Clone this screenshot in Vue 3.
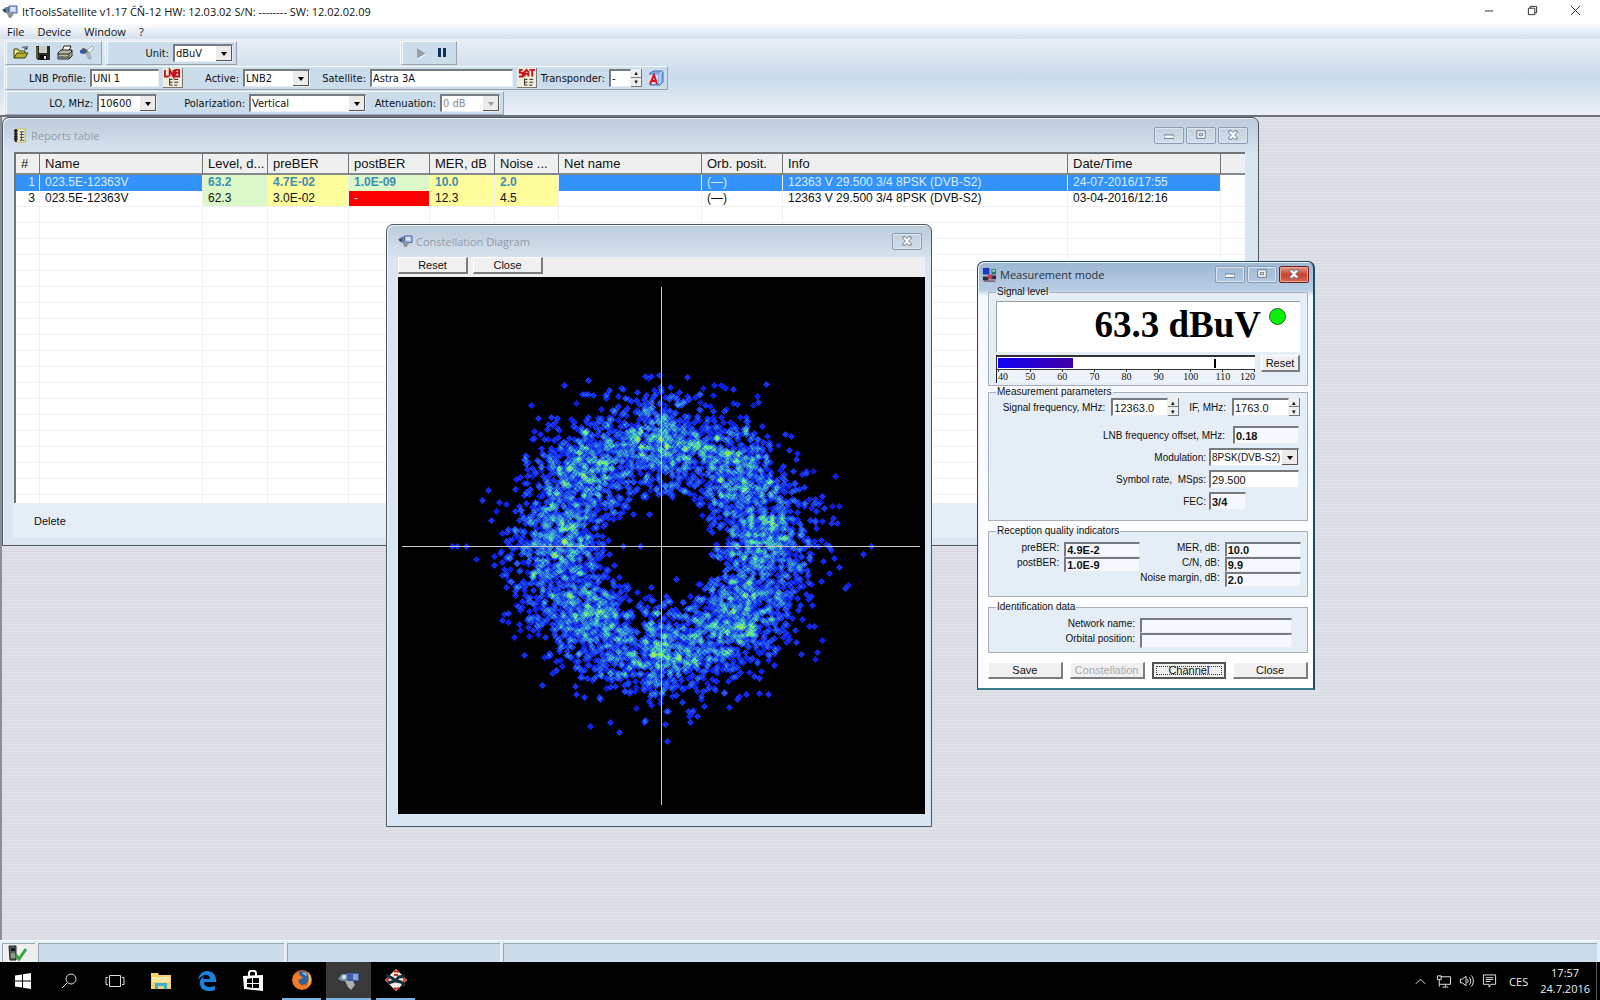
<script setup>
import { ref, onMounted } from 'vue'

const columns = [
  { label: '#', width: 24 },
  { label: 'Name', width: 163 },
  { label: 'Level, d...', width: 65 },
  { label: 'preBER', width: 81 },
  { label: 'postBER', width: 81 },
  { label: 'MER, dB', width: 65 },
  { label: 'Noise ...', width: 64 },
  { label: 'Net name', width: 143 },
  { label: 'Orb. posit.', width: 81 },
  { label: 'Info', width: 285 },
  { label: 'Date/Time', width: 153 },
  { label: '', width: 24 }
]

const tones = ['', '', 'green', 'yellow', 'green', 'yellow', 'yellow', '', '', '', '', 'plain']

const reports = [
  ['1', '023.5E-12363V', '63.2', '4.7E-02', '1.0E-09', '10.0', '2.0', '', '(—)', '12363 V 29.500 3/4 8PSK (DVB-S2)', '24-07-2016/17:55', ''],
  ['3', '023.5E-12363V', '62.3', '3.0E-02', '-', '12.3', '4.5', '', '(—)', '12363 V 29.500 3/4 8PSK (DVB-S2)', '03-04-2016/12:16', '']
]

const menus = ['File', 'Device', 'Window', '?']
const scale = [40, 50, 60, 70, 80, 90, 100, 110, 120]

const unit = ref('dBuV')
const profile = ref('UNI 1')
const active = ref('LNB2')
const satellite = ref('Astra 3A')
const transponder = ref('-')
const lo = ref('10600')
const polarization = ref('Vertical')
const frequency = ref('12363.0')
const intermediate = ref('1763.0')
const offset = ref('0.18')
const modulation = ref('8PSK(DVB-S2)')
const symbolRate = ref('29.500')
const fec = ref('3/4')
const level = ref(63.3)
const plot = ref(null)

// small seeded generator, keeps the diagram the same on every load
let seed = 20160724
const random = () => {
  seed = (seed * 1664525 + 1013904223) >>> 0
  return (seed + 1) / 4294967297
}
const gauss = () => Math.sqrt(-2 * Math.log(random())) * Math.cos(2 * Math.PI * random())

const shades = [
  [0, 0, 0],
  [12, 32, 236],
  [30, 72, 236],
  [48, 120, 222],
  [62, 160, 208],
  [74, 204, 184],
  [84, 238, 150],
  [130, 248, 110],
  [205, 220, 50]
]

const drawConstellation = () => {
  const canvas = plot.value
  const w = canvas.width
  const h = canvas.height
  const cx = 263
  const cy = 269
  const hits = new Float32Array(w * h)

  const hit = (px, py, weight) => {
    const x = Math.round(px)
    const y = Math.round(py)
    for (let dy = -3; dy <= 3; dy++) {
      for (let dx = -3; dx <= 3; dx++) {
        if (Math.abs(dx) + Math.abs(dy) > 3) continue
        const i = (y + dy) * w + x + dx
        if (i >= 0 && i < hits.length) hits[i] += weight
      }
    }
  }

  for (let i = 0; i < 5600; i++) {
    const angle = Math.floor(random() * 8) * Math.PI / 4 + gauss() * 0.27
    const radius = 109 + gauss() * 25
    if (radius < 50) continue
    hit(cx + Math.cos(angle) * radius, cy + Math.sin(angle) * radius, 0.8 + random() * 0.9)
  }

  const strays = [
    [-209, 0], [-204, 0], [-195, 0], [-38, 0], [-21, 0], [210, 0], [202, 8], [168, 0],
    [-97, -161], [-68, -151], [97, -144], [-2, -171], [-42, 186], [-17, 176], [4, 178],
    [29, 176], [36, 170], [-179, -46], [-173, -56], [145, -73], [161, -50], [172, -28],
    [-123, -128], [-135, -90], [-137, 109], [-119, 139], [107, 148], [140, 108], [178, 21],
    [-167, 19], [-61, 153], [15, 33], [-10, 41], [-28, -32], [-12, -32]
  ]
  strays.forEach(([x, y]) => hit(cx + x, cy + y, 1.5))

  const ctx = canvas.getContext('2d')
  const image = ctx.createImageData(w, h)
  for (let i = 0; i < hits.length; i++) {
    const heat = hits[i] > 1 ? 1 + (hits[i] - 1) * (0.45 + random() * 0.4) : hits[i]
    const t = Math.min(heat, shades.length - 1)
    const k = Math.min(Math.floor(t), shades.length - 2)
    const f = t - k
    for (let c = 0; c < 3; c++) {
      image.data[i * 4 + c] = shades[k][c] * (1 - f) + shades[k + 1][c] * f
    }
    image.data[i * 4 + 3] = 255
  }
  ctx.putImageData(image, 0, 0)

  ctx.fillStyle = '#c9c9c0'
  ctx.fillRect(cx, 10, 1, 518)
  ctx.fillRect(4, cy, 518, 1)
}

onMounted(drawConstellation)
</script>

<template>
  <div class="desktop">
    <svg class="defs" aria-hidden="true">
      <symbol id="meter" viewBox="0 0 16 14">
        <path d="M0 5 4 2h4v6H3z" fill="#6b7f94" />
        <path d="M7 1h8v7H7z" fill="#b4cdf2" stroke="#3a5aa4" />
        <path d="M9 3h4M9 5h4" stroke="#fff" />
        <path d="M4 7h7l1 2-3 4H7z" fill="#8d969c" />
        <path d="M1 4h3v3H2z" fill="#3d4b5c" />
      </symbol>
      <symbol id="cross" viewBox="0 0 12 12">
        <path d="M1 1h3l2 2 2-2h3v2L8 6l3 3v2H8L6 9l-2 2H1V9l3-3-3-3z" fill="#fff" stroke="#566577" />
      </symbol>
      <symbol id="mini" viewBox="0 0 12 12">
        <rect x="0" y="6" width="12" height="4" fill="#fff" stroke="#566577" />
      </symbol>
      <symbol id="maxi" viewBox="0 0 12 12">
        <path d="M1 1h10v9H1z" fill="#fff" stroke="#566577" />
        <path d="M4 4h4v3H4z" fill="#d3dfeb" stroke="#566577" />
      </symbol>
    </svg>

    <header class="titlebar">
      <svg class="app-icon"><use href="#meter" /></svg>
      <span class="app-title">ItToolsSatellite v1.17 ČŇ-12 HW: 12.03.02 S/N: -------- SW: 12.02.02.09</span>
      <button class="sys" aria-label="Minimize"><svg viewBox="0 0 12 12"><path d="M1 6.500h9" /></svg></button>
      <button class="sys" aria-label="Restore"><svg viewBox="0 0 12 12"><path d="M1.500 3.500h7v7h-7zM3.500 3.500v-2h7v7h-2" /></svg></button>
      <button class="sys" aria-label="Close application"><svg viewBox="0 0 12 12"><path d="M1 1l10 10M11 1L1 11" /></svg></button>
    </header>

    <nav class="menubar">
      <button v-for="m in menus" :key="m">{{ m }}</button>
    </nav>

    <section class="toolbars">
      <div class="bar-row">
        <div class="band">
          <button class="tool" aria-label="Open">
            <svg viewBox="0 0 16 16">
              <path d="M1 13V4h4l1 2h6v2" fill="#f3ee7c" stroke="#3e3c10" />
              <path d="M1 13l3-5h11l-3 5z" fill="#b6ac32" stroke="#3e3c10" />
              <path d="M9 3c2-2 4-1 5 1M14 1v3h-3" fill="none" stroke="#1c2c48" />
            </svg>
          </button>
          <button class="tool" aria-label="Save file">
            <svg viewBox="0 0 16 16">
              <path d="M1 1h14v14H3l-2-2z" fill="#2a2c20" />
              <path d="M4 1h8v7H4z" fill="#c8ccc8" />
              <path d="M5 10h7v5H5z" fill="#0c0c0c" /><path d="M9 11h2v3H9z" fill="#e8e8e8" />
              <path d="M2 2v11" stroke="#8a8a40" />
            </svg>
          </button>
          <button class="tool" aria-label="Print">
            <svg viewBox="0 0 16 16">
              <path d="M5 6l2-5h7l-2 5z" fill="#fff" stroke="#222" />
              <path d="M1 8l3-3h11v6l-3 3H1z" fill="#b8b8b0" stroke="#222" />
              <path d="M1 9h11l3-3M2 12h9M12 9v5" stroke="#222" fill="none" />
              <path d="M7 11h2" stroke="#d8c820" />
            </svg>
          </button>
          <button class="tool" aria-label="Connect">
            <svg viewBox="0 0 16 16">
              <path d="M1 6l3-3 3 1 2 3-3 2-4-1z" fill="#4b5866" />
              <path d="M8 5l5-4 2 2-4 5z" fill="#e6edf3" stroke="#a0adb9" />
              <path d="M6 8l4-1 3 6-2 2-2-1z" fill="#aab3bc" /><path d="M1 5l3 2v2L1 8z" fill="#2d5cc0" />
            </svg>
          </button>
        </div>
        <div class="band unit-band">
          <label for="unit" class="l62">Unit:</label>
          <span class="combo w60"><select id="unit" v-model="unit"><option>dBuV</option></select></span>
        </div>
        <div class="band play-band">
          <button class="tool" aria-label="Start" disabled><svg viewBox="0 0 16 16"><path d="M5 3v11l9-5z" fill="#9a9da0" /><path d="M5 14l9-5" stroke="#fff" /></svg></button>
          <button class="tool" aria-label="Pause"><svg viewBox="0 0 16 16"><path d="M4 3h3v9H4zM9 3h3v9H9z" fill="#10305c" /></svg></button>
        </div>
      </div>

      <div class="bar-row">
        <div class="band">
          <label for="profile" class="l80">LNB Profile:</label>
          <input id="profile" v-model="profile" class="box w69">
          <button class="pic" aria-label="Edit LNB profiles">
            <svg viewBox="0 0 20 20">
              <path d="M2 2v7h4M7 9V2l4 7V2M13 2h4v7h-4zM13 5h4" fill="none" stroke="#c41420" stroke-width="2" />
              <path d="M7 11v7M7 12h3M7 15h3M7 18h3M12 12h4M12 15h4M12 18h3" stroke="#222" fill="none" />
            </svg>
          </button>
          <label for="active" class="l60">Active:</label>
          <span class="combo w67"><select id="active" v-model="active"><option>LNB2</option></select></span>
          <label for="satellite" class="l60">Satellite:</label>
          <input id="satellite" v-model="satellite" class="box w143">
          <button class="pic" aria-label="Edit satellites">
            <svg viewBox="0 0 20 20">
              <path d="M6 2H3v3h3v4H2M8 9V4l2-2 2 2v5M8 6h4M13 2h6M16 2v7" fill="none" stroke="#c41420" stroke-width="2" />
              <path d="M8 11v7M8 12h3M8 15h3M8 18h3M13 12h4M13 15h4M13 18h3" stroke="#222" fill="none" />
            </svg>
          </button>
          <label for="transponder" class="l72">Transponder:</label>
          <input id="transponder" v-model="transponder" class="box w22">
          <span class="spin"><button aria-label="Next transponder">▴</button><button aria-label="Previous transponder">▾</button></span>
          <button class="tool detect" aria-label="Auto detect">
            <svg viewBox="0 0 16 16">
              <path d="M2 3l4-2h9v11l-3 3H2z" fill="#7fb0ea" stroke="#3d6cb8" />
              <path d="M12 4v10M12 4l3-3" stroke="#e4f0fc" />
              <path d="M1 5h9v9H1z" fill="#f2d8e4" />
              <path d="M2 14L6 5l3 9M3 11h5" fill="none" stroke="#d01828" stroke-width="2" />
            </svg>
          </button>
        </div>
      </div>

      <div class="bar-row">
        <div class="band">
          <label for="lo" class="l87">LO, MHz:</label>
          <span class="combo w60"><select id="lo" v-model="lo"><option>10600</option></select></span>
          <label for="pol" class="l92">Polarization:</label>
          <span class="combo w117"><select id="pol" v-model="polarization"><option>Vertical</option></select></span>
          <label for="att" class="l74">Attenuation:</label>
          <span class="combo w60 off"><select id="att" disabled><option>0 dB</option></select></span>
        </div>
      </div>
    </section>

    <main class="workspace">
      <section class="window reports">
        <div class="caption">
          <svg viewBox="0 0 16 16">
            <path d="M4 1h9v14H4z" fill="#f8f7c8" stroke="#c0b648" />
            <path d="M3 1v14M1 3h4M1 6h4M1 9h4M1 12h4" stroke="#222" stroke-width="2" />
            <path d="M7 4h5M7 7h5M7 10h5M7 13h5M9 4v9" stroke="#33339a" />
          </svg>
          <h2>Reports table</h2>
          <button class="cap" aria-label="Minimize reports"><svg><use href="#mini" /></svg></button>
          <button class="cap" aria-label="Maximize reports"><svg><use href="#maxi" /></svg></button>
          <button class="cap" aria-label="Close reports"><svg><use href="#cross" /></svg></button>
        </div>
        <div class="list">
          <table>
            <colgroup>
              <col v-for="(c, i) in columns" :key="i" :style="{ width: c.width + 'px' }">
            </colgroup>
            <thead>
              <tr><th v-for="(c, i) in columns" :key="i" scope="col">{{ c.label }}</th></tr>
            </thead>
            <tbody>
              <tr v-for="(row, r) in reports" :key="r" :class="{ selected: r === 0 }">
                <td v-for="(cell, i) in row" :key="i" :class="[tones[i], { red: i === 4 && cell === '-' }]">{{ cell }}</td>
              </tr>
              <tr v-for="n in 19" :key="'empty' + n">
                <td v-for="(c, i) in columns" :key="i"></td>
              </tr>
            </tbody>
          </table>
        </div>
        <div class="report-actions"><button>Delete</button></div>
      </section>

      <section class="window constellation">
        <div class="caption">
          <svg class="low"><use href="#meter" /></svg>
          <h2>Constellation Diagram</h2>
          <button class="cap" aria-label="Close constellation diagram"><svg><use href="#cross" /></svg></button>
        </div>
        <div class="plot-actions">
          <button class="btn">Reset</button>
          <button class="btn">Close</button>
        </div>
        <canvas ref="plot" width="527" height="537"></canvas>
      </section>

      <section class="window measure">
        <div class="caption">
          <svg viewBox="0 0 16 16">
            <path d="M1 1h7v7H1z" fill="#1838c8" /><path d="M10 2h5v6h-5z" fill="#2c7870" />
            <path d="M1 10h6v4H1zM9 9h6v4H9z" fill="#2a2a34" /><path d="M6 8h5v5H6z" fill="#c84058" />
            <path d="M2 15h12" stroke="#601828" /><path d="M11 3h3v2h-3z" fill="#9fe0c8" />
          </svg>
          <h2>Measurement mode</h2>
          <button class="cap" aria-label="Minimize measurement"><svg><use href="#mini" /></svg></button>
          <button class="cap" aria-label="Maximize measurement"><svg><use href="#maxi" /></svg></button>
          <button class="cap danger" aria-label="Close measurement"><svg><use href="#cross" /></svg></button>
        </div>
        <div class="panel">
          <fieldset class="signal">
            <legend>Signal level</legend>
            <div class="display">
              <output>63.3 dBuV</output>
              <i class="lamp"></i>
            </div>
            <div class="gauge-row">
              <div class="gauge">
                <div class="track">
                  <div class="fill" :style="{ width: (level - 40) / 80 * 100 + '%' }"></div>
                  <div class="peak"></div>
                </div>
                <div class="ticks"><span v-for="s in scale" :key="s">{{ s }}</span></div>
              </div>
              <button class="btn">Reset</button>
            </div>
          </fieldset>

          <fieldset class="params">
            <legend>Measurement parameters</legend>
            <div class="line first">
              <label for="freq">Signal frequency, MHz:</label>
              <span class="spinbox"><input id="freq" v-model="frequency" class="box"><span class="spin"><button aria-label="Raise frequency">▴</button><button aria-label="Lower frequency">▾</button></span></span>
              <label for="inter" class="pad-if">IF, MHz:</label>
              <span class="spinbox"><input id="inter" v-model="intermediate" class="box"><span class="spin"><button aria-label="Raise IF">▴</button><button aria-label="Lower IF">▾</button></span></span>
            </div>
            <div class="line">
              <label for="offset">LNB frequency offset, MHz:</label>
              <input id="offset" v-model="offset" class="box ro w66" readonly>
            </div>
            <div class="line near">
              <label for="modulation">Modulation:</label>
              <span class="combo w90"><select id="modulation" v-model="modulation"><option>8PSK(DVB-S2)</option></select></span>
            </div>
            <div class="line near">
              <label for="rate">Symbol rate,&nbsp; MSps:</label>
              <input id="rate" v-model="symbolRate" class="box w90">
            </div>
            <div class="line near">
              <label for="fec">FEC:</label>
              <span class="w90"><input id="fec" v-model="fec" class="box ro w37" readonly></span>
            </div>
          </fieldset>

          <fieldset class="quality">
            <legend>Reception quality indicators</legend>
            <div class="pairs">
              <label for="pre">preBER:</label><input id="pre" value="4.9E-2" class="box ro" readonly>
              <label for="post">postBER:</label><input id="post" value="1.0E-9" class="box ro" readonly>
            </div>
            <div class="pairs">
              <label for="mer">MER, dB:</label><input id="mer" value="10.0" class="box ro" readonly>
              <label for="cn">C/N, dB:</label><input id="cn" value="9.9" class="box ro" readonly>
              <label for="margin">Noise margin, dB:</label><input id="margin" value="2.0" class="box ro" readonly>
            </div>
          </fieldset>

          <fieldset class="ident">
            <legend>Identification data</legend>
            <div class="pairs wide">
              <label for="net">Network name:</label><input id="net" value="" class="box ro" readonly>
              <label for="orb">Orbital position:</label><input id="orb" value="" class="box ro" readonly>
            </div>
          </fieldset>

          <div class="buttons">
            <button class="btn">Save</button>
            <button class="btn" disabled>Constellation</button>
            <button class="btn default">Channel</button>
            <button class="btn">Close</button>
          </div>
        </div>
      </section>
    </main>

    <footer class="statusbar">
      <div class="cell device">
        <svg viewBox="0 0 20 16">
          <path d="M1 1h7v14H2z" fill="#566058" stroke="#222" /><path d="M3 3h4v3H3z" fill="#101820" /><path d="M3 8h4v5H3z" fill="#86a08c" />
          <path d="M8 10l3 4 7-10" fill="none" stroke="#35a53c" stroke-width="3" />
        </svg>
      </div>
      <div class="cell second"></div>
      <div class="cell third"></div>
      <div class="cell rest"></div>
    </footer>

    <div class="taskbar">
      <button class="task" aria-label="Start menu"><svg viewBox="0 0 16 16"><path d="M0 2.500 7 1.500v6H0zM8 1.300 16 0v7.500H8zM0 8.500h7v6l-7-1zM8 8.500h8V16l-8-1.300z" fill="#fff" /></svg></button>
      <button class="task" aria-label="Search"><svg viewBox="0 0 16 16"><circle cx="10" cy="6" r="5" fill="none" stroke="#ddd" /><path d="M6 10L1 15" stroke="#ddd" /></svg></button>
      <button class="task" aria-label="Task view"><svg class="wide-icon" viewBox="0 0 20 16"><path d="M4.500 2.500h11v11h-11zM3 4.500H1v7h2M17 4.500h2v7h-2" fill="none" stroke="#ddd" /></svg></button>
      <button class="task" aria-label="File Explorer">
        <svg class="wide-icon" viewBox="0 0 20 18"><path d="M0 1h7l1 2h12v14H0z" fill="#f5d06c" /><path d="M1 5h18v5H1z" fill="#fbe8a4" /><path d="M4 17v-6h12v6h-3v-3H7v3z" fill="#38b0d8" /></svg>
      </button>
      <button class="task" aria-label="Edge">
        <svg class="wide-icon" viewBox="0 0 20 20"><path d="M1 9C2 3 6 0 10 0c6 0 9 4 9 9v2H7c0 3 2 5 6 5 2 0 4-1 5-1v4c-2 1-4 1-6 1-6 0-9-3-9-8 0-4 2-6 5-7-1 1-2 2-2 3h7c0-2-1-4-4-4-3 0-6 2-8 5z" fill="#1a82dc" /></svg>
      </button>
      <button class="task" aria-label="Store">
        <svg class="store-icon" viewBox="0 0 20 22"><path d="M0 6l20-1v16L1 19z" fill="#fff" /><path d="M6 6V3c0-3 7-3 7 0v3" fill="none" stroke="#fff" stroke-width="2" /><path d="M4 9l5-1v5H4zM10 8h6v5h-6zM4 14h5v4l-5-1zM10 14h6v4h-6z" fill="#000" /></svg>
      </button>
      <button class="task open" aria-label="Firefox">
        <svg class="big-icon" viewBox="0 0 22 22"><circle cx="11" cy="11" r="10" fill="#e66522" /><circle cx="11" cy="9" r="7" fill="#2c62a8" /><path d="M3 5c-3 6-1 13 6 15 5 1 10-2 11-7-3 4-8 5-11 2-2-2-2-4 0-5l3-1-2-2-2-1V3C6 3 5 5 4 6z" fill="#f07c24" /><path d="M17 3c4 4 4 10 0 14 1-5 1-9 0-14z" fill="#fbc83c" /><path d="M11 4c3-2 5 0 5 3-2-1-3-1-5-3z" fill="#78b8e0" /></svg>
      </button>
      <button class="task open current" aria-label="ItToolsSatellite">
        <svg class="big-icon" viewBox="0 0 22 22"><path d="M0 10l4-5h6v7H4z" fill="#7e90aa" /><path d="M9 4h12v8H9z" fill="#3e5ea8" /><path d="M15 6h5M15 8h5M15 10h5" stroke="#dce6f4" /><path d="M7 12h8l2 4-4 5-3-3z" fill="#a7b0b6" /><circle cx="6" cy="8" r="2" fill="#dce4ec" /></svg>
      </button>
      <button class="task open" aria-label="Tools">
        <svg class="big-icon" viewBox="0 0 22 22"><path d="M11 0l11 11-11 11L0 11z" fill="#f3ece4" /><path d="M9 3l2-1 3 1M9 6h4M18 9l2 2-2 3M9 19l2 1 3-1M4 9l-2 2 2 3" fill="none" stroke="#cc3322" stroke-width="2" /><path d="M1 6l6 3 4 3 5 1 4 4M3 14l7-2 4-4 6-1" stroke="#18303c" stroke-width="3" fill="none" /></svg>
      </button>
      <div class="tray">
        <svg viewBox="0 0 16 16"><path d="M3 11l5-5 5 5" /></svg>
        <svg viewBox="0 0 16 16"><path d="M5 3.500h10.500v8H4M1.500 2.500h4v4h-4zM3.500 7v7M7 14.500h6M10 12v2" /></svg>
        <svg viewBox="0 0 16 16"><path d="M1.500 6v4h2l4 3V3l-4 3zM9 6c1 1 1 3 0 4M11 4c2 2 2 6 0 8M13 2c3 3 3 9 0 12" /></svg>
        <svg viewBox="0 0 16 16"><path d="M1.500 1.500h13v10h-5l-2 3v-3h-6zM4 4.500h8M4 6.500h8M4 8.500h5" /></svg>
        <span>CES</span>
        <time>17:57<br>24.7.2016</time>
      </div>
    </div>
  </div>
</template>

<style>
body {
  margin: 0;
}
</style>

<style scoped>
* {
  box-sizing: border-box;
}

.desktop {
  display: flex;
  flex-direction: column;
  min-height: 100vh;
  font-family: "Liberation Sans", Arial, sans-serif;
  font-size: 11px;
  color: #111;
  background: #fff;
}

.defs {
  position: absolute;
  width: 0;
  height: 0;
}

button {
  padding: 0;
  border: none;
  background: none;
  font: inherit;
  color: inherit;
}

h2 {
  margin: 0;
  font-weight: 400;
}

/* main window */
.titlebar {
  display: flex;
  align-items: center;
  height: 23px;
  padding: 0 3px 0 2px;
  font-family: "Open Sans", "Noto Sans", sans-serif;
  font-size: 11px;
}

.app-icon {
  width: 16px;
  height: 14px;
  margin-right: 4px;
}

.app-title {
  flex: 1;
}

.sys {
  width: 43px;
  height: 20px;
}

.sys svg {
  width: 11px;
  height: 11px;
  fill: none;
  stroke: #222;
}

.menubar {
  display: flex;
  gap: 13px;
  height: 16px;
  padding-left: 7px;
  font-family: "Open Sans", "Noto Sans", sans-serif;
  font-size: 11px;
  line-height: 15px;
  background: linear-gradient(#fff, #d3e0ee);
}

.toolbars {
  display: flex;
  flex-direction: column;
  gap: 1px;
  padding: 2px 4px 0;
  font-family: "DejaVu Sans Condensed", "Noto Sans", sans-serif;
  font-size: 11px;
  background: linear-gradient(#e9eef6, #c9dbeb 50%, #dce8f2 80%, #ebeff6);
  border-bottom: 2px solid #6c727a;
}

.bar-row {
  display: flex;
}

.band {
  display: flex;
  align-items: center;
  height: 24px;
  padding: 0 3px;
  background: #cbdceb;
  border-top: 1px solid #f8fbfd;
  border-left: 3px double #f8fbfd;
  border-right: 1px solid #97a2ad;
  border-bottom: 1px solid #97a2ad;
}

.unit-band {
  margin-left: 3px;
}

.play-band {
  margin-left: 163px;
  padding-left: 6px;
}

.tool {
  width: 22px;
  height: 20px;
}

.tool svg {
  display: block;
  width: 16px;
  height: 16px;
  margin: 0 auto;
}

.detect {
  padding-left: 5px;
}

.band label {
  padding-right: 4px;
  text-align: right;
  white-space: nowrap;
}

.l60 { width: 60px; }
.l62 { width: 62px; }
.l72 { width: 72px; }
.l74 { width: 74px; }
.l80 { width: 80px; }
.l87 { width: 87px; }
.l92 { width: 92px; }

.pic {
  width: 20px;
  height: 20px;
  margin-left: 4px;
  background: #f0eed8;
  border-right: 1px solid #777;
  border-bottom: 1px solid #777;
}

.pic svg {
  display: block;
  width: 19px;
  height: 19px;
}

.box,
.combo {
  height: 18px;
  border-top: 2px solid #777b80;
  border-left: 2px solid #777b80;
  border-right: 1px solid #e8eef4;
  border-bottom: 1px solid #e8eef4;
  border-radius: 0;
  background: #fff;
}

.box {
  min-width: 0;
  padding: 0 1px;
  font: inherit;
  color: #111;
  outline: none;
}

.ro {
  background: #f5f9fd;
  font-weight: 700;
}

.combo {
  position: relative;
  display: inline-flex;
}

.combo select {
  width: 100%;
  padding: 0 0 0 1px;
  border: none;
  background: none;
  font: inherit;
  color: #111;
  appearance: none;
  outline: none;
}

.combo::before {
  content: "";
  position: absolute;
  top: 0;
  right: 0;
  bottom: 0;
  width: 15px;
  background: #ecebe9;
  border-right: 1px solid #555;
  border-bottom: 1px solid #555;
}

.combo::after {
  content: "";
  position: absolute;
  top: 6px;
  right: 5px;
  border: 3px solid transparent;
  border-top: 4px solid #000;
  border-bottom: 0;
}

.combo.off select {
  color: #8a8a8a;
  opacity: 1;
}

.combo.off::after {
  border-top-color: #999;
}

.w22 { width: 22px; }
.w37 { width: 37px; }
.w60 { width: 60px; }
.w66 { width: 66px; }
.w67 { width: 67px; }
.w69 { width: 69px; }
.w90 { width: 90px; }
.w117 { width: 117px; }
.w143 { width: 143px; }

.spin {
  display: flex;
  flex-direction: column;
  width: 11px;
  height: 18px;
}

.spin button {
  flex: 1;
  min-height: 0;
  font-size: 7px;
  line-height: 7px;
  background: #efefef;
  border-right: 1px solid #777;
  border-bottom: 1px solid #777;
}

/* child windows */
.workspace {
  position: relative;
  flex: 1;
  overflow: hidden;
  border-left: 2px solid #8a9098;
  background: repeating-linear-gradient(#dee1e7 0 2px, #d6d9df 2px 3px);
}

.window {
  position: absolute;
  display: flex;
  flex-direction: column;
  padding: 0 10px 7px;
  background: linear-gradient(#bccbda, #d9e5f1 36px);
  border: 1px solid #50565e;
  border-radius: 7px 7px 0 0;
  box-shadow: inset 1px 1px #edf3f8;
}

.caption {
  display: flex;
  align-items: center;
  font-family: "Open Sans", "Noto Sans", sans-serif;
  color: #929ca6;
}

.caption > svg {
  width: 15px;
  height: 15px;
  margin-right: 3px;
}

.caption > .low {
  height: 13px;
}

.caption h2 {
  flex: 1;
  font-size: 11px;
}

.cap {
  display: flex;
  align-items: center;
  justify-content: center;
  width: 30px;
  height: 17px;
  margin-left: 2px;
  border: 1px solid #8c9cb0;
  border-radius: 2px;
  box-shadow: inset 0 0 0 1px #dce7f2;
}

.cap svg {
  width: 10px;
  height: 10px;
}

.reports {
  top: 0;
  left: 0;
  width: 1257px;
  height: 429px;
}

.reports .caption {
  height: 34px;
}

.list {
  flex: 1;
  min-height: 0;
  overflow: hidden;
  margin: 0 3px 0 1px;
  border-top: 2px solid #70757a;
  border-left: 2px solid #70757a;
  background: #fff;
}

table {
  width: 100%;
  table-layout: fixed;
  border-collapse: separate;
  border-spacing: 0;
  font-size: 12px;
}

th {
  height: 21px;
  padding: 0 0 0 5px;
  font-size: 13px;
  font-weight: 400;
  line-height: 17px;
  text-align: left;
  white-space: nowrap;
  background: #efefef;
  border-right: 1px solid #70757a;
  border-bottom: 2px solid #85898d;
}

td {
  height: 16px;
  padding: 0 0 0 5px;
  line-height: 15px;
  white-space: nowrap;
  border-right: 1px solid #f0f0f0;
  border-bottom: 1px solid #f0f0f0;
}

td:first-child {
  padding: 0 4px 0 0;
  text-align: right;
}

th:last-child,
td:last-child {
  border-right: none;
}

td.green {
  background: #dcf8c8;
}

td.yellow {
  background: #fdfd9c;
}

td.red {
  background: #fa0000;
  color: #fff;
}

.selected td {
  background: #3393fb;
  color: #d8ecff;
  border-bottom-color: transparent;
}

.selected td.green,
.selected td.yellow {
  color: #3c8eb4;
  font-weight: 700;
}

.selected td.green {
  background: #dcf8c8;
}

.selected td.yellow {
  background: #fdfd9c;
}

.selected td.plain {
  background: #fff;
}

.report-actions {
  height: 35px;
  padding: 12px 0 0 21px;
  background: #e5edf6;
}

.constellation {
  top: 107px;
  left: 384px;
  width: 546px;
  height: 603px;
  padding-right: 6px;
  padding-left: 11px;
  padding-bottom: 12px;
}

.constellation .caption {
  flex: none;
  height: 32px;
  padding-right: 3px;
}

.plot-actions {
  display: flex;
  flex: none;
  gap: 5px;
  height: 20px;
  background: #efefef;
}

.constellation canvas {
  display: block;
  width: 100%;
  flex: 1;
  min-height: 0;
}

.btn {
  height: 17px;
  line-height: 14px;
  background: #f0f0f0;
  border-top: 1px solid #fff;
  border-left: 1px solid #fff;
  border-right: 2px solid #7c7c7c;
  border-bottom: 2px solid #7c7c7c;
}

.plot-actions .btn {
  width: 70px;
}

.btn:disabled {
  color: #aaa;
}

.btn.default {
  border: 2px solid #555;
  line-height: 11px;
  outline: 1px dotted #333;
  outline-offset: -5px;
}

.measure {
  top: 144px;
  left: 975px;
  width: 338px;
  padding: 0 4px 4px;
  background: linear-gradient(#9cb7d3, #b8cee4 28px, #f4f9fd 34px, #fff);
  border-color: #1e4c60;
  border-right-width: 2px;
  border-bottom: 2px solid #3a7c88;
}

.measure .caption {
  height: 24px;
  color: #26313c;
}

.danger {
  border-color: #6e2020;
  background: linear-gradient(#e09a8c, #c8432e 50%, #d86a50);
  box-shadow: inset 0 0 0 1px #e8a898;
}

.panel {
  display: flex;
  flex-direction: column;
  padding: 0 1px 4px 6px;
}

fieldset {
  min-width: 0;
  margin: 0;
  padding: 0 7px;
  border: 1px solid #a8b1ba;
  background: #e5edf6;
}

legend,
.panel label {
  font-size: 10px;
  white-space: nowrap;
}

legend {
  height: 12px;
  padding: 0 1px;
  line-height: 12px;
}

.signal {
  height: 100px;
}

.display {
  display: flex;
  justify-content: flex-end;
  gap: 8px;
  height: 51px;
  margin-top: 3px;
  padding: 1px 14px 0 0;
  background: #fff;
  border-top: 1px solid #9aa0a6;
  border-left: 1px solid #9aa0a6;
  font: 700 37px/44px "Liberation Serif", "Times New Roman", serif;
  color: #000;
}

.lamp {
  width: 17px;
  height: 17px;
  margin-top: 5px;
  border: 1px solid #1f6b2a;
  border-radius: 50%;
  background: #0bf00b;
}

.gauge-row {
  display: flex;
  gap: 6px;
  margin-top: 3px;
}

.gauge-row .btn {
  width: 39px;
}

.gauge {
  flex: 1;
  border-left: 1px solid #222;
  background: #edf3f9;
}

.track {
  position: relative;
  height: 15px;
  padding: 1px 0 1px 1px;
  border-top: 2px solid #333;
  border-bottom: 1px solid #333;
  background: #fff;
}

.fill {
  height: 100%;
  background: linear-gradient(90deg, #1200f4, #3f00a4);
}

.peak {
  position: absolute;
  top: 2px;
  left: 84%;
  width: 2px;
  height: 9px;
  background: #000;
}

.ticks {
  display: flex;
  height: 13px;
  padding-left: 1px;
  font: 10px/14px "Liberation Serif", serif;
}

.ticks span {
  flex: 2 0 0;
  text-align: center;
  background: linear-gradient(#333, #333) 50% 0 / 1px 2px no-repeat;
}

.ticks span:first-child {
  flex-grow: 1;
  text-align: left;
  background-position: 0 0;
}

.ticks span:last-child {
  flex-grow: 1;
  text-align: right;
  background-position: 100% 0;
}

.params {
  height: 135px;
}

.quality {
  display: flex;
  justify-content: space-between;
  height: 72px;
  margin-top: 4px;
}

.ident {
  height: 52px;
  margin-top: 4px;
}

.line {
  display: flex;
  align-items: center;
  justify-content: flex-end;
  gap: 8px;
  height: 18px;
  margin-bottom: 4px;
  padding-right: 1px;
}

.line.first {
  gap: 6px;
  margin-bottom: 10px;
  padding-right: 0;
}

.line.near {
  gap: 3px;
}

.line .combo {
  font-size: 10px;
}

.pad-if {
  padding-left: 4px;
}

.spinbox {
  display: flex;
}

.spinbox .box {
  width: 57px;
}

.pairs {
  display: grid;
  grid-template-columns: auto 76px;
  grid-auto-rows: 15px;
  column-gap: 5px;
  align-content: start;
  padding-top: 5px;
  padding-left: 21px;
  text-align: right;
}

.pairs .box {
  width: 100%;
  height: 15px;
}

.quality .pairs + .pairs {
  padding-left: 0;
}

.wide {
  grid-template-columns: 139px 152px;
  padding-left: 0;
}

.buttons {
  display: grid;
  grid-template-columns: repeat(4, 1fr);
  gap: 7px;
  margin-top: 9px;
  padding-bottom: 1px;
}

/* bottom bars */
.statusbar {
  display: flex;
  gap: 3px;
  height: 22px;
  padding: 2px 3px 0 2px;
  background: #e6eef6;
  border-top: 1px solid #fff;
}

.cell {
  background: #cbdceb;
  border-top: 1px solid #98a4b0;
  border-left: 1px solid #98a4b0;
}

.device {
  width: 33px;
  background: #eef0f0;
}

.device svg {
  display: block;
  width: 20px;
  height: 16px;
  margin: 1px 0 0 5px;
}

.second {
  width: 246px;
}

.third {
  width: 213px;
}

.rest {
  flex: 1;
}

.taskbar {
  display: flex;
  align-items: stretch;
  height: 38px;
  background: #000;
  color: #eee;
  font-family: "Open Sans", "Noto Sans", sans-serif;
}

.task {
  display: flex;
  align-items: center;
  justify-content: center;
  width: 46px;
}

.task svg {
  width: 16px;
  height: 16px;
}

.task .wide-icon {
  width: 20px;
  height: 20px;
}

.task .store-icon,
.task .big-icon {
  width: 22px;
  height: 22px;
}

.open {
  width: 39px;
  margin-left: 6px;
  border-bottom: 2px solid #76b5e4;
}

.open ~ .open {
  margin-left: 5px;
}

.current {
  width: 45px;
  background: #3a3a3a;
}

.tray {
  display: flex;
  align-items: center;
  gap: 8px;
  margin-left: auto;
  padding-right: 6px;
  border-right: 1px solid #555;
  margin-right: 3px;
}

.tray svg {
  width: 15px;
  height: 16px;
  fill: none;
  stroke: #eee;
}

.tray span {
  margin-left: 4px;
}

.tray time {
  margin-left: 4px;
  line-height: 16px;
  text-align: center;
}
</style>
